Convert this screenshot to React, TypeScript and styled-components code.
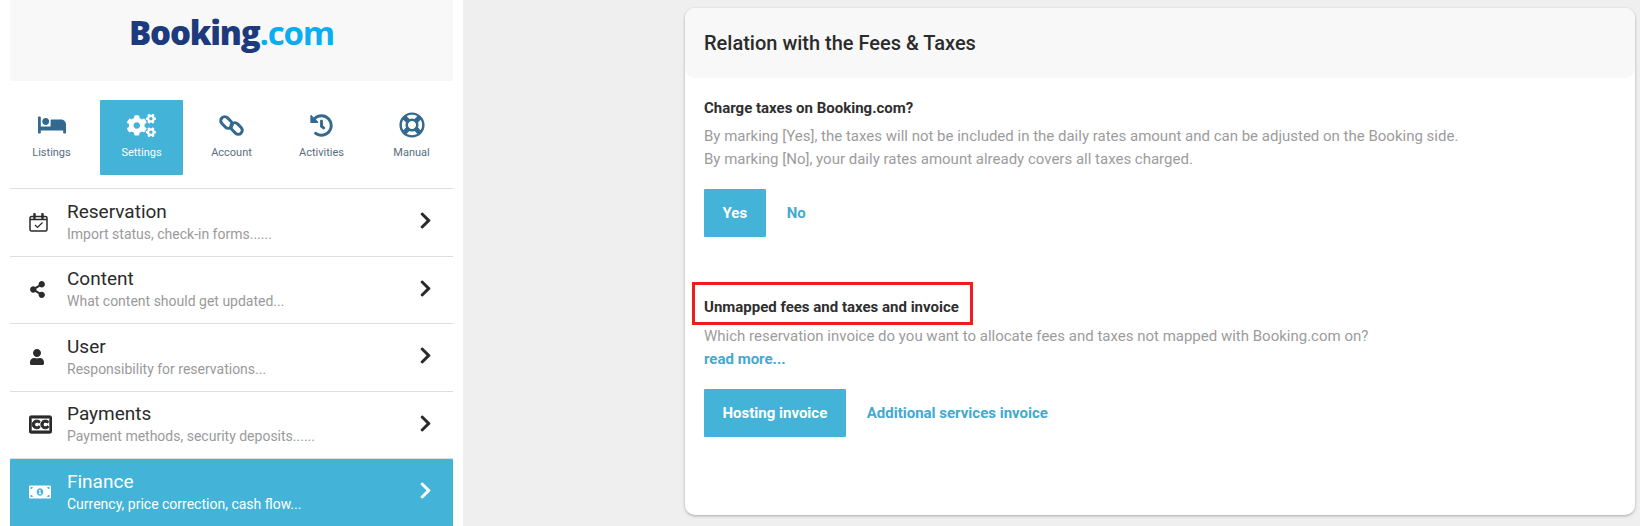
import React from "react";
import styled, { createGlobalStyle } from "styled-components";
import {
  FaBed,
  FaChevronRight,
  FaCogs,
  FaHistory,
  FaMoneyBillAlt,
  FaRegClosedCaptioning,
  FaRegLifeRing,
  FaShareAlt,
  FaUser,
} from "react-icons/fa";

const GlobalStyle = createGlobalStyle`
  html, body {
    margin: 0;
    padding: 0;
    background: #efefef;
    font-family: Roboto, "Liberation Sans", sans-serif;
    overflow: hidden;
  }
`;

const Page = styled.div`
  display: flex;
  width: 1640px;
  height: 526px;
  overflow: hidden;
`;

const Sidebar = styled.aside`
  width: 443px;
  padding: 0 10px;
  background: #fff;
  flex-shrink: 0;
`;

const LogoBar = styled.div`
  height: 81px;
  background: #f8f8f9;
  display: flex;
  justify-content: center;
  padding-top: 9px;
  box-sizing: border-box;
`;

const Logo = styled.div`
  font-family: "Open Sans", sans-serif;
  font-size: 33px;
  font-weight: 800;
  letter-spacing: -1.2px;
  line-height: 48px;
  color: #1c3a7c;

  span {
    color: #08aeef;
    font-weight: 700;
  }
`;

const Tabs = styled.div`
  display: grid;
  grid-template-columns: repeat(5, 83px);
  gap: 7px;
  padding: 19px 0 13px;
  border-bottom: 1px solid #dedede;
`;

const Tab = styled.div<{ $active?: boolean }>`
  height: 75px;
  border-radius: 1px;
  box-sizing: border-box;
  padding-top: 11px;
  display: flex;
  flex-direction: column;
  align-items: center;
  background: ${(p) => (p.$active ? "#43b3d8" : "transparent")};
  color: ${(p) => (p.$active ? "#fff" : "#33698f")};
`;

const TabIcon = styled.div<{ $size: number }>`
  height: 28px;
  display: flex;
  align-items: center;
  justify-content: center;
  font-size: ${(p) => p.$size}px;
`;

const TabLabel = styled.div<{ $active?: boolean }>`
  margin-top: 7px;
  font-size: 11px;
  line-height: 14px;
  color: ${(p) => (p.$active ? "#fff" : "#566e80")};
`;

const Row = styled.div<{ $active?: boolean }>`
  display: flex;
  align-items: center;
  height: 67.5px;
  box-sizing: border-box;
  padding: 0 18px 0 19px;
  border-bottom: 1px solid ${(p) => (p.$active ? "transparent" : "#dedede")};
  background: ${(p) => (p.$active ? "#43b3d8" : "transparent")};
  color: ${(p) => (p.$active ? "#fff" : "#2b2b2b")};
  border-radius: ${(p) => (p.$active ? "1px" : "0")};
`;

const RowIcon = styled.div<{ $size: number }>`
  width: 38px;
  font-size: ${(p) => p.$size}px;
  display: flex;
  align-items: center;
  flex-shrink: 0;
`;

const RowText = styled.div`
  flex: 1;
  padding-bottom: 1px;
`;

const RowTitle = styled.div`
  font-size: 19px;
  line-height: 24px;
`;

const RowSub = styled.div<{ $active?: boolean }>`
  font-size: 14px;
  line-height: 20px;
  color: ${(p) => (p.$active ? "#fff" : "#9a9a9a")};
`;

const Chevron = styled(FaChevronRight)`
  font-size: 19px;
  margin-bottom: 3px;
`;

const CaptionIcon = styled(FaRegClosedCaptioning)`
  stroke: currentColor;
  stroke-width: 22px;
`;

const Main = styled.main`
  flex: 1;
  padding: 8px 5px 11px 222px;
  min-width: 0;
`;

const Card = styled.section`
  height: 507px;
  background: #fff;
  border-radius: 10px;
  box-shadow: 0 1px 3px rgba(0, 0, 0, 0.3);
`;

const CardHeader = styled.header`
  height: 70px;
  background: #f8f8f8;
  border-radius: 10px;
  padding: 0 19px;
  display: flex;
  align-items: center;
  font-size: 20px;
  font-weight: 500;
  color: #2b2b2b;
`;

const CardBody = styled.div`
  padding: 19px 19px 0;
`;

const Section = styled.div`
  margin-bottom: 59px;
`;

const Label = styled.div`
  position: relative;
  font-size: 15px;
  font-weight: 700;
  line-height: 22px;
  color: #2f2f2f;
`;

const Highlight = styled.div`
  position: absolute;
  left: -12px;
  top: -14px;
  width: 281px;
  height: 43px;
  box-sizing: border-box;
  border: 3.5px solid #ee1c25;
`;

const Desc = styled.p<{ $gap?: number }>`
  margin: ${(p) => p.$gap ?? 6}px 0 0;
  font-size: 15px;
  line-height: 23px;
  color: #9c9c9c;
`;

const ReadMore = styled.a`
  display: block;
  font-size: 15px;
  font-weight: 700;
  line-height: 23px;
  color: #43a9cf;
`;

const Options = styled.div`
  display: flex;
  align-items: center;
  margin-top: 18px;
  gap: 21px;
`;

const Option = styled.button<{ $active?: boolean }>`
  height: 48px;
  border: 0;
  border-radius: 1px;
  padding: ${(p) => (p.$active ? "0 18.5px" : "0")};
  font-family: inherit;
  font-size: 15px;
  font-weight: 700;
  background: ${(p) => (p.$active ? "#43b3d8" : "transparent")};
  color: ${(p) => (p.$active ? "#fff" : "#43a9cf")};
`;

const ChainIcon = () => (
  <svg width="25" height="25" viewBox="0 0 25 25" fill="none" stroke="currentColor" strokeWidth="3">
    <rect x="1" y="5.5" width="13" height="8" rx="4" transform="rotate(45 7.5 9.5)" />
    <rect x="11" y="11.5" width="13" height="8" rx="4" transform="rotate(45 17.5 15.5)" />
  </svg>
);

const CalendarIcon = () => (
  <svg width="19" height="19" viewBox="0 0 19 19" fill="none" stroke="currentColor">
    <rect x="1" y="3.5" width="17" height="14.5" rx="1.5" strokeWidth="1.5" />
    <path d="M1 6.5h17" strokeWidth="1.5" />
    <path d="M5.5 1v4M13.5 1v4" strokeWidth="2.4" strokeLinecap="round" />
    <path d="M6 12l2.5 2.5L13.5 9.5" strokeWidth="1.2" />
  </svg>
);

const tabs = [
  { label: "Listings", icon: <FaBed />, size: 28 },
  { label: "Settings", icon: <FaCogs />, size: 29, active: true },
  { label: "Account", icon: <ChainIcon />, size: 25 },
  { label: "Activities", icon: <FaHistory />, size: 23 },
  { label: "Manual", icon: <FaRegLifeRing />, size: 26 },
];

const rows = [
  { title: "Reservation", sub: "Import status, check-in forms......", icon: <CalendarIcon />, size: 19 },
  { title: "Content", sub: "What content should get updated...", icon: <FaShareAlt />, size: 17 },
  { title: "User", sub: "Responsibility for reservations...", icon: <FaUser />, size: 16 },
  { title: "Payments", sub: "Payment methods, security deposits......", icon: <CaptionIcon />, size: 23 },
  { title: "Finance", sub: "Currency, price correction, cash flow...", icon: <FaMoneyBillAlt />, size: 22, active: true },
];

const App: React.FC = () => {
  return (
    <Page>
      <GlobalStyle />
      <Sidebar>
        <LogoBar>
          <Logo>
            Booking<span>.com</span>
          </Logo>
        </LogoBar>
        <Tabs>
          {tabs.map((t) => (
            <Tab key={t.label} $active={t.active}>
              <TabIcon $size={t.size}>{t.icon}</TabIcon>
              <TabLabel $active={t.active}>{t.label}</TabLabel>
            </Tab>
          ))}
        </Tabs>
        {rows.map((r) => (
          <Row key={r.title} $active={r.active}>
            <RowIcon $size={r.size}>{r.icon}</RowIcon>
            <RowText>
              <RowTitle>{r.title}</RowTitle>
              <RowSub $active={r.active}>{r.sub}</RowSub>
            </RowText>
            <Chevron />
          </Row>
        ))}
      </Sidebar>
      <Main>
        <Card>
          <CardHeader>Relation with the Fees &amp; Taxes</CardHeader>
          <CardBody>
            <Section>
              <Label>Charge taxes on Booking.com?</Label>
              <Desc>
                By marking [Yes], the taxes will not be included in the daily rates amount and can be adjusted on the Booking side.
                <br />
                By marking [No], your daily rates amount already covers all taxes charged.
              </Desc>
              <Options>
                <Option $active>Yes</Option>
                <Option>No</Option>
              </Options>
            </Section>
            <Section>
              <Label>
                Unmapped fees and taxes and invoice
                <Highlight />
              </Label>
              <Desc $gap={7}>
                Which reservation invoice do you want to allocate fees and taxes not mapped with Booking.com on?
                <ReadMore>read more...</ReadMore>
              </Desc>
              <Options>
                <Option $active>Hosting invoice</Option>
                <Option>Additional services invoice</Option>
              </Options>
            </Section>
          </CardBody>
        </Card>
      </Main>
    </Page>
  );
};

export default App;
